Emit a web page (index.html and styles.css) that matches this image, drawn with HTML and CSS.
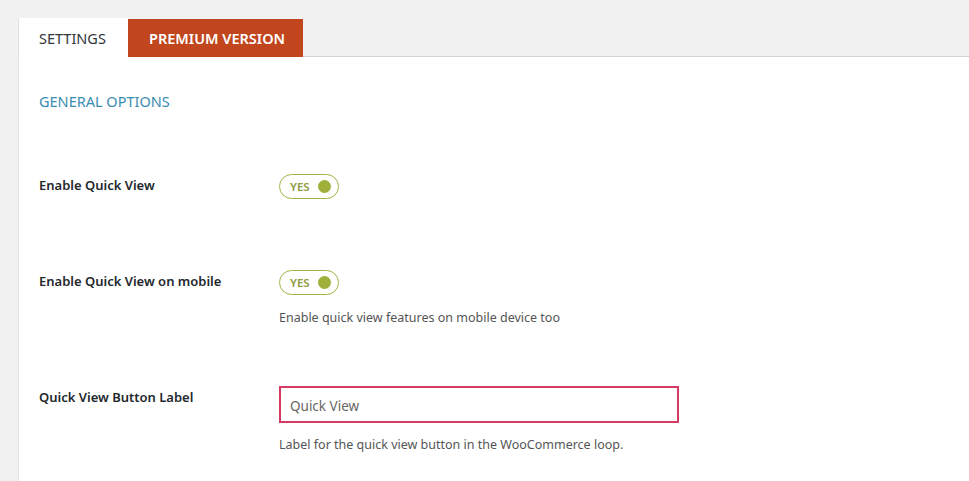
FILE: index.html
```html
<!DOCTYPE html>
<html lang="en">
<head>
    <meta charset="UTF-8">
    <meta name="viewport" content="width=device-width, initial-scale=1.0">
    <title>Quick View Settings</title>
    <link rel="stylesheet" href="styles.css">
</head>
<body>
    <nav class="tabs">
        <a href="#" class="tab tab-active">SETTINGS</a>
        <a href="#" class="tab tab-premium">PREMIUM VERSION</a>
    </nav>
    <div class="panel">
        <h2 class="section-title">GENERAL OPTIONS</h2>

        <div class="row">
            <div class="label">Enable Quick View</div>
            <div class="field">
                <span class="toggle"><span class="toggle-text">YES</span><span class="toggle-dot"></span></span>
                <p class="desc"></p>
            </div>
        </div>

        <div class="row">
            <div class="label">Enable Quick View on mobile</div>
            <div class="field">
                <span class="toggle"><span class="toggle-text">YES</span><span class="toggle-dot"></span></span>
                <p class="desc">Enable quick view features on mobile device too</p>
            </div>
        </div>

        <div class="row">
            <div class="label">Quick View Button Label</div>
            <div class="field">
                <input type="text" class="text-input" value="Quick View">
                <p class="desc desc-input">Label for the quick view button in the WooCommerce loop.</p>
            </div>
        </div>
    </div>
</body>
</html>
```

FILE: styles.css
```css
body { margin: 0; padding: 18px 0 0 18px; background: #f1f1f1; font-family: "Noto Sans", "Open Sans", sans-serif; font-size: 13px; color: #23282d; overflow: hidden; }
.tabs { display: flex; border-bottom: 1px solid #d4d4d4; height: 38px; }
.tab { display: flex; align-items: center; padding: 0 20px; font-size: 14.5px; text-decoration: none; height: 39px; box-sizing: border-box; white-space: nowrap; }
.tab-active { background: #fff; color: #32373c; width: 110px; border-left: 1px solid #e2e2e2; }
.tab-premium { background: #c1461e; color: #fff; font-weight: 600; margin-top: 1px; height: 38px; width: 175px; padding: 0 0 0 21px; }
.panel { background: #fff; padding: 34px 20px 0 20px; border-left: 1px solid #e6e6e6; box-sizing: border-box; height: calc(100vh - 57px); }
.section-title { margin: 0 0 63px; font-size: 14.5px; font-weight: 400; color: #3a8cb1; line-height: 20px; }
.row { display: flex; align-items: flex-start; margin-bottom: 58px; }
.row:last-child { margin-bottom: 0; }
.label { width: 240px; flex-shrink: 0; font-weight: 600; line-height: 20px; margin-top: 1px; font-size: 13px; }
.field { display: flex; flex-direction: column; align-items: flex-start; }
.toggle { display: flex; align-items: center; justify-content: space-between; box-sizing: border-box; width: 60px; height: 25px; border: 1px solid #a4b244; border-radius: 13px; padding: 0 7px 0 10px; }
.toggle-text { font-size: 11.5px; font-weight: 600; color: #8f9c45; }
.toggle-dot { width: 13px; height: 13px; border-radius: 50%; background: #9eaf3a; }
.desc { margin: 13px 0 0; line-height: 20px; color: #555; font-size: 12.5px; }
.desc:empty { height: 0; }
.text-input { box-sizing: border-box; width: 400px; height: 37px; border: 2px solid #d43a62; padding: 2px 9px 0; font-family: inherit; font-size: 13.5px; color: #666; outline: none; }
.desc-input { margin-top: 12px; }
```
